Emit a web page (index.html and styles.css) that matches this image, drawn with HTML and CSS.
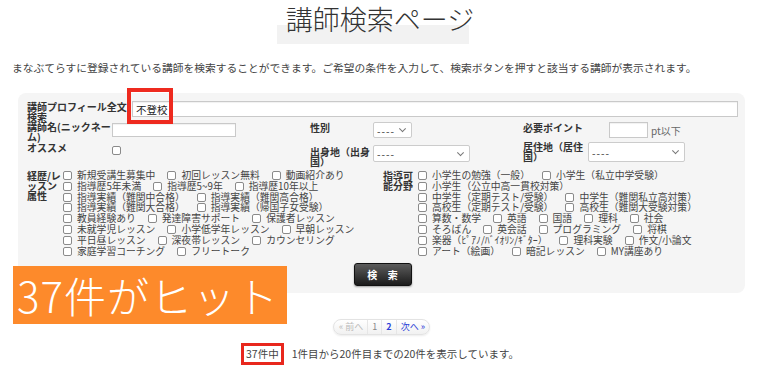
FILE: index.html
```html
<!DOCTYPE html>
<html lang="ja">
<head>
    <meta charset="UTF-8">
    <meta name="viewport" content="width=device-width, initial-scale=1.0">
    <link rel="stylesheet" href="styles.css">
</head>
<body>
<div class="page">
    <h1 class="page-title"><span>講師検索ページ</span></h1>
    <p class="lead">まなぶてらすに登録されている講師を検索することができます。ご希望の条件を入力して、検索ボタンを押すと該当する講師が表示されます。</p>

    <form class="search-panel">
        <div class="row-full">
            <label class="lbl lbl-wide">講師プロフィール全文検索</label>
            <div class="full-field">
                <input type="text" class="txt txt-full" value="不登校">
                <span class="mark-keyword"></span>
            </div>
        </div>

        <div class="field-grid">
            <label class="lbl">講師名(ニックネーム)</label>
            <div><input type="text" class="txt txt-name"></div>
            <label class="lbl lbl-top">性別</label>
            <div><span class="sel sel-sex"><select><option>----</option></select></span></div>
            <label class="lbl lbl-top">必要ポイント</label>
            <div class="point"><input type="text" class="txt txt-point"><span class="unit">pt以下</span></div>

            <label class="lbl lbl-top">オススメ</label>
            <div><input type="checkbox" class="box box-recommend"></div>
            <label class="lbl lbl-origin">出身地（出身国）</label>
            <div><span class="sel sel-origin"><select><option>----</option></select></span></div>
            <label class="lbl">居住地（居住国）</label>
            <div><span class="sel sel-home"><select><option>----</option></select></span></div>
        </div>

        <div class="attr-grid">
            <div class="attr-group">
                <div class="lbl attr-lbl">経歴/レッスン属性</div>
                <div class="chk-list list-left">
                    <label class="chk"><input type="checkbox" class="box">新規受講生募集中</label>
                    <label class="chk"><input type="checkbox" class="box">初回レッスン無料</label>
                    <label class="chk"><input type="checkbox" class="box">動画紹介あり</label>
                    <label class="chk"><input type="checkbox" class="box">指導歴5年未満</label>
                    <label class="chk"><input type="checkbox" class="box">指導歴5~9年</label>
                    <label class="chk"><input type="checkbox" class="box">指導歴10年以上</label>
                    <label class="chk"><input type="checkbox" class="box">指導実績（難関中合格）</label>
                    <label class="chk"><input type="checkbox" class="box">指導実績（難関高合格）</label>
                    <label class="chk"><input type="checkbox" class="box">指導実績（難関大合格）</label>
                    <label class="chk"><input type="checkbox" class="box">指導実績（帰国子女受験）</label>
                    <label class="chk"><input type="checkbox" class="box">教員経験あり</label>
                    <label class="chk"><input type="checkbox" class="box">発達障害サポート</label>
                    <label class="chk"><input type="checkbox" class="box">保護者レッスン</label>
                    <label class="chk"><input type="checkbox" class="box">未就学児レッスン</label>
                    <label class="chk"><input type="checkbox" class="box">小学低学年レッスン</label>
                    <label class="chk"><input type="checkbox" class="box">早朝レッスン</label>
                    <label class="chk"><input type="checkbox" class="box">平日昼レッスン</label>
                    <label class="chk"><input type="checkbox" class="box">深夜帯レッスン</label>
                    <label class="chk"><input type="checkbox" class="box">カウンセリング</label>
                    <label class="chk"><input type="checkbox" class="box">家庭学習コーチング</label>
                    <label class="chk"><input type="checkbox" class="box">フリートーク</label>
                </div>
            </div>
            <div class="attr-group">
                <div class="lbl attr-lbl attr-lbl-field">指導可能分野</div>
                <div class="chk-list list-right">
                    <label class="chk"><input type="checkbox" class="box">小学生の勉強（一般）</label>
                    <label class="chk"><input type="checkbox" class="box">小学生（私立中学受験）</label>
                    <label class="chk"><input type="checkbox" class="box">小学生（公立中高一貫校対策）</label>
                    <label class="chk"><input type="checkbox" class="box">中学生（定期テスト/受験）</label>
                    <label class="chk"><input type="checkbox" class="box">中学生（難関私立高対策）</label>
                    <label class="chk"><input type="checkbox" class="box">高校生（定期テスト/受験）</label>
                    <label class="chk"><input type="checkbox" class="box">高校生（難関大受験対策）</label>
                    <label class="chk"><input type="checkbox" class="box">算数・数学</label>
                    <label class="chk"><input type="checkbox" class="box">英語</label>
                    <label class="chk"><input type="checkbox" class="box">国語</label>
                    <label class="chk"><input type="checkbox" class="box">理科</label>
                    <label class="chk"><input type="checkbox" class="box">社会</label>
                    <label class="chk"><input type="checkbox" class="box">そろばん</label>
                    <label class="chk"><input type="checkbox" class="box">英会話</label>
                    <label class="chk"><input type="checkbox" class="box">プログラミング</label>
                    <label class="chk"><input type="checkbox" class="box">将棋</label>
                    <label class="chk"><input type="checkbox" class="box">楽器（ﾋﾟｱﾉ/ﾊﾞｲｵﾘﾝ/ｷﾞﾀｰ）</label>
                    <label class="chk"><input type="checkbox" class="box">理科実験</label>
                    <label class="chk"><input type="checkbox" class="box">作文/小論文</label>
                    <label class="chk"><input type="checkbox" class="box">アート（絵画）</label>
                    <label class="chk"><input type="checkbox" class="box">暗記レッスン</label>
                    <label class="chk"><input type="checkbox" class="box">MY講座あり</label>
                </div>
            </div>
        </div>

        <div class="actions">
            <button type="button" class="btn-search">検 索</button>
        </div>
    </form>

    <div class="hit-badge">37件がヒット</div>

    <div class="pager-wrap">
        <ul class="pager">
            <li class="disabled">« 前へ</li>
            <li class="current">1</li>
            <li><a href="#" class="page-num">2</a></li>
            <li><a href="#">次へ »</a></li>
        </ul>
    </div>

    <p class="count"><span class="count-total">37件中</span>1件目から20件目までの20件を表示しています。</p>
</div>
</body>
</html>
```

FILE: styles.css
```css
/* Base */
* {
    box-sizing: border-box;
}
body {
    margin: 0;
    font-family: "Noto Sans CJK JP", "Noto Sans", sans-serif;
    color: #444;
    background: #fff;
}
.page {
    position: relative;
}

/* Title */
.page-title {
    position: relative;
    z-index: 0;
    margin: 0;
    padding-top: 1px;
    text-align: center;
    font-size: 27px;
    font-weight: 300;
    line-height: 35px;
    color: #333;
}
.page-title span {
    position: relative;
    display: inline-block;
}
.page-title span::before {
    content: "";
    position: absolute;
    left: -9px;
    top: 24px;
    width: 192px;
    height: 19px;
    background: #f2f2f2;
    z-index: -1;
}
.lead {
    margin: 24px 0 0 12px;
    font-size: 10.75px;
    line-height: 16px;
    color: #444;
}

/* Search panel */
.search-panel {
    margin: 17px 15px 0 18px;
    padding: 8px 7px 7px 9px;
    background: #f5f5f5;
    border-radius: 8px;
    font-size: 10px;
}
.lbl {
    font-weight: bold;
    color: #333;
    line-height: 10px;
}
.lbl-top {
    padding-top: 1px;
}
.txt {
    border: 1px solid #c9c9c9;
    background: #fff;
    box-shadow: inset 0 1px 1px rgba(0, 0, 0, 0.06);
    padding: 0 3px;
    font: 10.5px "Noto Sans CJK JP", sans-serif;
    color: #222;
    outline: none;
}

.row-full {
    display: flex;
    align-items: flex-start;
}
.lbl-wide {
    width: 105px;
    flex: none;
    padding-top: 1px;
}
.full-field {
    position: relative;
    flex: 1;
}
.txt-full {
    display: block;
    width: 100%;
    height: 16px;
}
.mark-keyword {
    position: absolute;
    left: -5px;
    top: -13px;
    width: 46px;
    height: 36px;
    border: 4px solid #ee2a1f;
}

.field-grid {
    display: grid;
    grid-template-columns: 85px 198px 63px 150px 65px 1fr;
    grid-template-rows: 20px 28px;
    align-items: start;
}
.txt-name {
    display: block;
    width: 124px;
    height: 14px;
    margin-top: 1px;
}
.point {
    display: flex;
    align-items: center;
    padding-left: 21px;
}
.txt-point {
    width: 39px;
    height: 16px;
}
.unit {
    margin-left: 3px;
    color: #666;
    font-size: 10px;
}
.lbl-origin {
    padding-top: 5px;
}

/* Selects */
.sel {
    position: relative;
    display: block;
}
.sel select {
    appearance: none;
    -webkit-appearance: none;
    display: block;
    width: 100%;
    height: 100%;
    border: 1px solid #ccc;
    border-radius: 2px;
    background: #fff;
    font: 10px "Noto Sans CJK JP", sans-serif;
    letter-spacing: 1px;
    color: #333;
    padding: 0 3px;
}
.sel::after {
    content: "";
    position: absolute;
    right: 7px;
    top: 50%;
    width: 4px;
    height: 4px;
    border-right: 1px solid #777;
    border-bottom: 1px solid #777;
    transform: translateY(-75%) rotate(45deg);
    pointer-events: none;
}
.sel-sex {
    width: 39px;
    height: 16px;
}
.sel-origin {
    width: 97px;
    height: 17px;
    margin-top: 3px;
}
.sel-home {
    width: 97px;
    height: 20px;
}

/* Checkboxes */
.box {
    appearance: none;
    -webkit-appearance: none;
    width: 9px;
    height: 9px;
    margin: 0 5px 0 0;
    vertical-align: -1px;
    border: 1px solid #8a8a8a;
    border-radius: 2px;
    background: #fff;
}
.box-recommend {
    display: block;
    margin-top: 4px;
}

.attr-grid {
    display: grid;
    grid-template-columns: 356px 1fr;
}
.attr-group {
    display: flex;
    align-items: flex-start;
}
.attr-lbl {
    width: 36px;
    flex: none;
    line-height: 9.8px;
    line-break: anywhere;
    padding-top: 1px;
}
.attr-lbl-field {
    width: 35px;
}
.chk-list {
    display: flex;
    flex-wrap: wrap;
    column-gap: 12px;
}
.list-left {
    width: 300px;
}
.list-right {
    width: 285px;
}
.chk {
    white-space: nowrap;
    font-size: 9.8px;
    line-height: 10.8px;
    color: #444;
}

/* Search button */
.actions {
    margin-top: 7px;
    text-align: center;
}
.btn-search {
    width: 58px;
    height: 23px;
    padding: 0 0 0 4px;
    border: 1px solid #111;
    border-radius: 3px;
    background: linear-gradient(#5c5c5c, #1b1b1b);
    box-shadow: 0 1px 2px rgba(0, 0, 0, 0.35);
    color: #fff;
    font: bold 10px "Noto Sans CJK JP", sans-serif;
    letter-spacing: 4px;
    cursor: pointer;
}

/* Hit annotation */
.hit-badge {
    position: absolute;
    left: 13px;
    top: 266px;
    width: 274px;
    height: 58px;
    padding-left: 4px;
    background: #fd8a2b;
    color: #fff;
    font-size: 42px;
    font-weight: 300;
    letter-spacing: 1px;
    line-height: 58px;
    white-space: nowrap;
}

/* Pager */
.pager-wrap {
    display: flex;
    justify-content: center;
    margin-top: 26px;
    padding-left: 3px;
}
.pager {
    display: flex;
    list-style: none;
    margin: 0;
    padding: 0;
    height: 16px;
    border: 1px solid #e3e3e3;
    border-radius: 8px;
    background: linear-gradient(#fff, #f1f1f1);
    box-shadow: 0 1px 2px rgba(0, 0, 0, 0.08);
}
.pager li {
    padding: 0 4px;
    border-left: 1px solid #e6e6e6;
    font-size: 9px;
    line-height: 14px;
    color: #888;
}
.pager li:first-child {
    border-left: none;
    padding-left: 5px;
}
.pager .disabled {
    color: #bbb;
}
.pager a {
    color: #2b3ed8;
    text-decoration: none;
}
.pager .page-num {
    font-weight: bold;
}

/* Result count */
.count {
    margin: 8px 0 0;
    text-align: center;
    font-size: 10.5px;
    line-height: 22px;
    color: #444;
}
.count-total {
    display: inline-block;
    vertical-align: top;
    margin-right: 8px;
    padding: 3px 2px;
    border: 3px solid #e8271d;
    line-height: 10px;
    background: #fff;
}
```
